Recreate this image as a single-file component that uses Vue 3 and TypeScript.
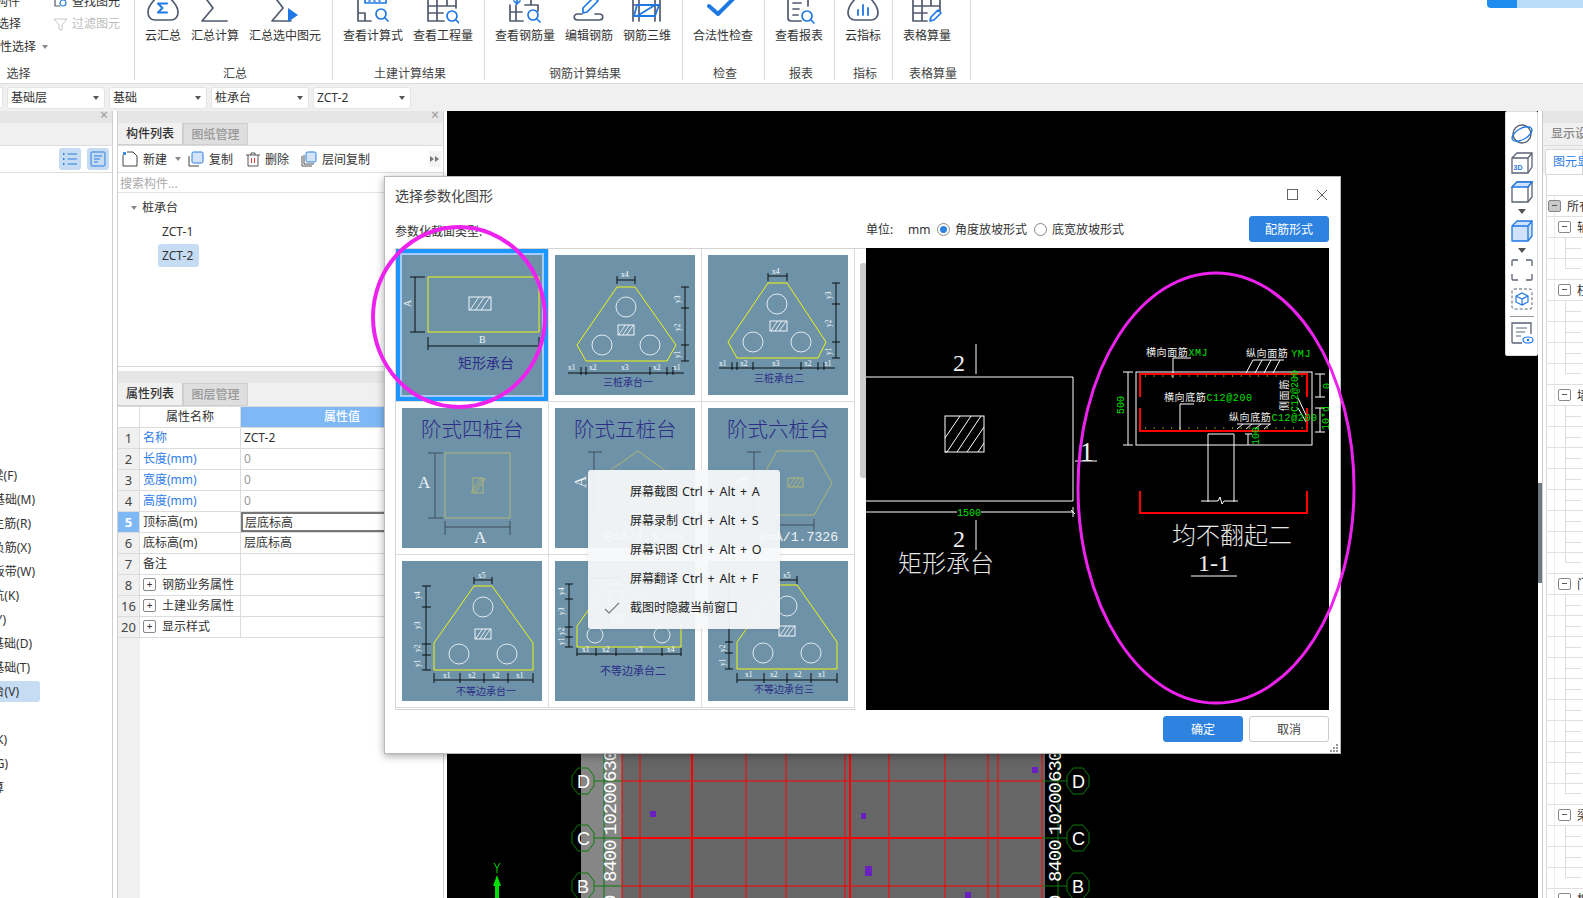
<script setup lang="ts">
interface Ico { dark?: string; blue?: string; solid?: string; sw?: number }
interface Tool { label: string; ico: Ico }
interface Group { name: string; width: number; tools: Tool[] }
const mag = (x: number, y: number) => `M${x + 5} ${y}a5 5 0 1 1-10 0a5 5 0 1 1 10 0M${x + 4} ${y + 4}L${x + 7} ${y + 7}`
const groups: Group[] = [
  { name: '汇总', width: 198, tools: [
    { label: '云汇总', ico: { dark: 'M8 -1C5 3 1 6 1 12C1 17 4 20 8 20H24C28 20 31 17 31 12C31 6 27 3 24 -1', blue: 'M20 3.5H11L15.5 8L11 12.5H20', sw: 2 } },
    { label: '汇总计算', ico: { dark: 'M28 21H3L14 8L5 -4' } },
    { label: '汇总选中图元', ico: { dark: 'M22 21H3L14 8L5 -4', solid: 'M19 8L29 15L19 22Z' } },
  ] },
  { name: '土建计算结果', width: 152, tools: [
    { label: '查看计算式', ico: { dark: 'M1 -2V21H14M1 13H8V21', blue: 'M8 -1V3H29V-1M12 1H13M17 1H18M22 1H23' + mag(24, 14) } },
    { label: '查看工程量', ico: { dark: 'M1 -2V21H17M1 6H29M1 13H16M10 -2V21M20 -2V6M29 -2V8', blue: mag(25, 16) } },
  ] },
  { name: '钢筋计算结果', width: 198, tools: [
    { label: '查看钢筋量', ico: { dark: 'M1 5V21H14M1 12H13M7 5V21M16 5H29V11M22 0V5', blue: 'M8 -2V3M5 1L8 4L11 1' + mag(24, 15) } },
    { label: '编辑钢筋', ico: { dark: 'M9 14H5C0 14 0 20 5 20H26C31 20 31 14 26 14H22', blue: 'M10 13L10 8L21 -3L25 1L14 12Z' } },
    { label: '钢筋三维', ico: { dark: 'M2 -2V21M8 -2V21M24 -2V21M29 -2V21M2 5H29', blue: 'M6 5H28L24 16H3ZM6 16L24 5', sw: 1.8 } },
  ] },
  { name: '检查', width: 82, tools: [
    { label: '合法性检查', ico: { blue: 'M2 6L11 14L28 -3', sw: 4 } },
  ] },
  { name: '报表', width: 70, tools: [
    { label: '查看报表', ico: { dark: 'M5 -3V18Q5 21 8 21H18M25 -2V6M10 3H18M10 9H16M10 15H15', blue: mag(24, 16) } },
  ] },
  { name: '指标', width: 58, tools: [
    { label: '云指标', ico: { dark: 'M8 -1C5 3 1 6 1 13C1 17 4 20 8 20H24C28 20 31 17 31 13C31 6 27 3 24 -1', blue: 'M11 10V15M16 5V15M21 8V15', sw: 1.8 } },
  ] },
  { name: '表格算量', width: 78, tools: [
    { label: '表格算量', ico: { dark: 'M2 -2V21H16M2 6H29V11M2 13H16M11 -2V21M20 -2V6M29 -2V11', blue: 'M19 21L20 17L27 10L30 13L23 20Z' } },
  ] },
]
const selects = ['基础层', '基础', '桩承台', 'ZCT-2']

const sideItems = [
  { t: '筏板主梁(F)', end: 17 }, { t: '筏板基础(M)', end: 35 }, { t: '筏板主筋(R)', end: 31 }, { t: '筏板负筋(X)', end: 31 },
  { t: '基础板带(W)', end: 35 }, { t: '集水坑(K)', end: 19 }, { t: '柱墩(Y)', end: 6 }, { t: '独立基础(D)', end: 32 },
  { t: '条形基础(T)', end: 30 }, { t: '桩承台(V)', end: 19, on: true }, { t: '', end: 0 }, { t: '地沟(K)', end: 7 },
  { t: '基础梁(G)', end: 8 }, { t: '自定义算', end: 4 },
]

interface Row { n: number; name: string; val?: string; blue?: boolean; gray?: boolean; sel?: boolean; plus?: boolean }
const props: Row[] = [
  { n: 1, name: '名称', val: 'ZCT-2', blue: true },
  { n: 2, name: '长度(mm)', val: '0', blue: true, gray: true },
  { n: 3, name: '宽度(mm)', val: '0', blue: true, gray: true },
  { n: 4, name: '高度(mm)', val: '0', blue: true, gray: true },
  { n: 5, name: '顶标高(m)', val: '层底标高', sel: true },
  { n: 6, name: '底标高(m)', val: '层底标高' },
  { n: 7, name: '备注' },
  { n: 8, name: '钢筋业务属性', plus: true },
  { n: 16, name: '土建业务属性', plus: true },
  { n: 20, name: '显示样式', plus: true },
]

interface Lab { x: number; y: number; t: string; s: number; f: string; r: number; serif?: boolean }
interface Pile { poly?: string; pc: string; circles: number[][]; hatch: number[]; hc: string; dims: string; dc: string; labs: Lab[] }
const navy = '#2d2d86'
const tiny = (x: number, y: number, t: string, r = 0): Lab => ({ x, y, t, s: 7.5, f: '#fff', r, serif: true })
const big = (x: number, y: number, t: string, s = 16, r = 0): Lab => ({ x, y, t, s, f: '#eef2f5', r, serif: true })
const cn = (x: number, y: number, t: string, s = 10): Lab => ({ x, y, t, s, f: navy, r: 0 })
const hatchPath = (h: number[]) => {
  const [x, y, w, ht] = h
  let d = ''
  for (let i = 1; i <= 3; i++) {
    const c = x + (w * i) / 4
    d += `M${c - ht / 3} ${y + ht}L${c + ht / 3} ${y}`
  }
  return d
}
const circ = (a: number[][], r = 10) => a.map((p) => [p[0], p[1], r])
const piles: Pile[] = [
  { poly: '26,22 137,22 137,77 26,77', pc: '#ffff00', circles: [], hatch: [67, 42, 22, 13], hc: '#fff',
    dims: 'M13 22V77M8 22H23M8 77H23M26 91H137M26 82V95M137 82V95', dc: '#000',
    labs: [{ ...big(9, 52, 'A', 10, -90) }, big(77, 88, 'B', 10), cn(56, 113, '矩形承台', 14)] },
  { poly: '62,32 80,32 121,90 112,106 31,106 22,90', pc: '#ffff00', circles: circ([[71, 52], [47, 90], [95, 90]]), hatch: [63, 70, 16, 10], hc: '#fff',
    dims: 'M62 25H80M62 21V29M80 21V29M130 32V106M126 32H134M126 53H134M126 90H134M126 106H134M13 118H129M26 112V120M31 112V120M95 112V120M112 112V120M118 112V120', dc: '#000',
    labs: [tiny(66, 22, 'x4'), tiny(125, 48, 'y3', -90), tiny(125, 76, 'y2', -90), tiny(125, 103, 'y1', -90), tiny(13, 115, 'x1'), tiny(34, 115, 'x2'), tiny(66, 115, 'x3'), tiny(98, 115, 'x2'), tiny(118, 115, 'x1'), cn(48, 131, '三桩承台一')] },
  { poly: '60,28 79,28 118,87 110,103 29,103 20,87', pc: '#ffff00', circles: circ([[69, 49], [45, 87], [93, 87]]), hatch: [62, 66, 17, 10], hc: '#fff',
    dims: 'M60 21H79M60 18V26M79 18V26M128 28V103M124 28H132M124 49H132M124 87H132M124 103H132M11 113H127M24 107V115M29 107V115M45 107V115M93 107V115M110 107V115M116 107V115', dc: '#000',
    labs: [tiny(64, 19, 'x4'), tiny(123, 44, 'y3', -90), tiny(123, 72, 'y2', -90), tiny(123, 100, 'y1', -90), tiny(11, 111, 'x1'), tiny(32, 111, 'x2'), tiny(64, 111, 'x3'), tiny(96, 111, 'x2'), tiny(116, 111, 'x1'), cn(46, 127, '三桩承台二')] },
  { poly: '43,45 108,45 108,110 43,110', pc: '#b8ba6e', circles: [], hatch: [71, 70, 10, 15], hc: '#b8ba6e',
    dims: 'M33 45V110M26 45H41M26 110H41M43 119H108M43 113V127M108 113V127', dc: '#3a4650',
    labs: [cn(19, 29, '阶式四桩台', 20.5), big(16, 80, 'A', 17), big(72, 135, 'A', 17)] },
  { poly: '83,43 118,68 105,108 60,108 47,68', pc: '#b8ba6e', circles: [], hatch: [76, 70, 14, 10], hc: '#b8ba6e',
    dims: 'M39 44V108M33 44H47M33 108H47', dc: '#3a4650',
    labs: [cn(19, 29, '阶式五桩台', 20.5), big(31, 80, 'A', 17, -90), { x: 49, y: 133, t: 'B=A/1.5385', s: 13.2, f: '#eef2f5', r: 0, serif: false }] },
  { poly: '69,43 106,43 124,75 106,107 69,107 51,75', pc: '#b8ba6e', circles: [], hatch: [80, 70, 15, 9], hc: '#b8ba6e',
    dims: 'M46 44V108M39 44H53M39 108H53M69 117H106M69 111V123M106 111V123', dc: '#3a4650',
    labs: [cn(19, 29, '阶式六桩台', 20.5), big(38, 80, 'A', 17, -90), { x: 51, y: 133, t: 'B=A/1.7326', s: 13.2, f: '#eef2f5', r: 0, serif: false }] },
  { poly: '72,25 90,25 131,82 131,109 32,109 32,82', pc: '#ffff00', circles: circ([[81, 46], [57, 93], [105, 93]]), hatch: [73, 68, 16, 10], hc: '#fff',
    dims: 'M72 19H90M72 16V23M90 16V23M24 25V109M20 25H29M20 46H29M20 83H29M20 94H29M20 109H29M32 119H131M32 112V122M58 112V122M82 112V122M106 112V122M131 112V122', dc: '#000',
    labs: [tiny(76, 17, 'x5'), tiny(18, 38, 'y4', -90), tiny(18, 68, 'y3', -90), tiny(18, 91, 'y2', -90), tiny(18, 106, 'y1', -90), tiny(41, 117, 'x1'), tiny(66, 117, 'x2'), tiny(90, 117, 'x2'), tiny(114, 117, 'x1'), cn(54, 134, '不等边承台一')] },
  { poly: '52,23 65,23 126,62 126,86 22,86 22,65', pc: '#ffff00', circles: circ([[61, 38], [40, 74], [107, 74]], 8), hatch: [57, 54, 12, 8], hc: '#fff',
    dims: 'M34 17H66M14 23V86M10 23H18M10 38H18M10 66H18M10 76H18M10 86H18M22 93H126M22 87V95M41 87V95M61 87V95M107 87V95M126 87V95', dc: '#000',
    labs: [tiny(9, 34, 'y4', -90), tiny(9, 54, 'y3', -90), tiny(9, 74, 'y2', -90), tiny(9, 84, 'y1', -90), tiny(27, 91, 'x1'), tiny(47, 91, 'x2'), tiny(80, 91, 'x3'), tiny(112, 91, 'x4'), cn(45, 114, '不等边承台二', 11)] },
  { poly: '70,24 89,24 129,81 129,108 29,108 29,81', pc: '#ffff00', circles: circ([[79, 45], [55, 92], [103, 92]]), hatch: [71, 65, 16, 10], hc: '#fff',
    dims: 'M70 19H89M70 15V23M89 15V23M21 24V108M17 81H25M17 92H25M17 108H25M29 119H129M29 112V122M56 112V122M79 112V122M103 112V122M129 112V122', dc: '#000',
    labs: [tiny(75, 17, 'x5'), tiny(17, 91, 'y2', -90), tiny(17, 105, 'y1', -90), tiny(37, 116, 'x1'), tiny(62, 116, 'x2'), tiny(86, 116, 'x2'), tiny(110, 116, 'x1'), cn(46, 132, '不等边承台三')] },
]

const menu = [
  { t: '屏幕截图', k: 'Ctrl + Alt + A' },
  { t: '屏幕录制', k: 'Ctrl + Alt + S' },
  { t: '屏幕识图', k: 'Ctrl + Alt + O' },
  { t: '屏幕翻译', k: 'Ctrl + Alt + F' },
  { t: '截图时隐藏当前窗口', k: '', check: true },
]

const vThin = [622, 640, 746, 786, 845, 889, 945, 988, 998, 1042]
const vThick = [692, 850]
const bubble = (cx: number, cy: number) => {
  const a = 11, b = 13
  return `M${cx - a} ${cy - 5}L${cx - 5} ${cy - b}H${cx + 5}L${cx + a} ${cy - 5}V${cy + 5}L${cx + 5} ${cy + b}H${cx - 5}L${cx - a} ${cy + 5}Z`
}
const axes = [
  { l: 'D', y: 781 },
  { l: 'C', y: 838 },
  { l: 'B', y: 886 },
]
const purple = [[650, 811, 6, 6], [861, 813, 5, 6], [865, 866, 7, 10], [1032, 767, 6, 6], [965, 892, 6, 6]]

const heads: Record<number, { t: string; lv: number }> = {
  0: { t: '所有构件', lv: 0 }, 1: { t: '轴线', lv: 1 }, 4: { t: '柱', lv: 1 }, 9: { t: '墙', lv: 1 },
  18: { t: '门窗洞', lv: 1 }, 29: { t: '梁', lv: 1 }, 33: { t: '板', lv: 1 },
}
const rightRows = Array.from({ length: 34 }, (_, i) => ({
  i,
  head: heads[i],
  last: !!heads[i + 1],
}))
</script>

<template>
  <div class="app">
    <header class="ribbon">
      <div class="grp grp-first">
        <div class="sel-tools">
          <div class="sel-col">
            <span>构件</span><span>选择</span><span>属性选择<i class="caret-sm"></i></span>
          </div>
          <div class="sel-col2">
            <span class="mini">
              <svg width="15" height="14" viewBox="0 0 15 14" fill="none"><path d="M2 -2V11H7" stroke="#555a68" stroke-width="1.2" /><circle cx="10" cy="8" r="3" stroke="#2d7fe0" stroke-width="1.2" /></svg>
              查找图元
            </span>
            <span class="mini off">
              <svg width="15" height="14" viewBox="0 0 15 14" fill="none"><path d="M1 2H14L9 8V13L6 12V8Z" stroke="#c8c8c8" /></svg>
              过滤图元
            </span>
          </div>
        </div>
        <div class="grp-name first-name">选择</div>
      </div>
      <div v-for="g in groups" :key="g.name" class="grp" :style="{ width: g.width + 'px' }">
        <div class="tools">
          <div v-for="t in g.tools" :key="t.label" class="tool">
            <svg class="tool-ico" viewBox="0 0 32 24" fill="none" stroke-linecap="round" stroke-linejoin="round">
              <path v-if="t.ico.dark" :d="t.ico.dark" stroke="#505a6e" stroke-width="1.7" />
              <path v-if="t.ico.blue" :d="t.ico.blue" stroke="#1f78e4" :stroke-width="t.ico.sw || 1.7" />
              <path v-if="t.ico.solid" :d="t.ico.solid" fill="#1f78e4" />
            </svg>
            <span class="tool-label">{{ t.label }}</span>
          </div>
        </div>
        <div class="grp-name">{{ g.name }}</div>
      </div>
      <div class="login"><span class="login-dark"></span><span class="login-light"></span></div>
    </header>

    <div class="selbar">
      <span class="stub"></span>
      <div v-for="s in selects" :key="s" class="drop">{{ s }}<i class="caret"></i></div>
    </div>

    <div class="main">
      <aside class="side">
        <div class="strip"><span class="x">×</span></div>
        <div class="side-tab"></div>
        <div class="side-tools">
          <span class="tbtn">
            <svg width="16" height="14" viewBox="0 0 16 14" fill="none" stroke="#2d7fe0"><path d="M5.5 2H15M5.5 7H15M5.5 12H15" /><path d="M1 2H2.5M1 7H2.5M1 12H2.5" stroke-width="2" /></svg>
          </span>
          <span class="tbtn">
            <svg width="16" height="16" viewBox="0 0 16 16" fill="none" stroke="#2d7fe0"><rect x="1" y="1" width="14" height="14" rx="1" /><path d="M4 5H12M4 8H10M4 11H8" /></svg>
          </span>
        </div>
        <ul class="side-list">
          <li v-for="(it, i) in sideItems" :key="i" class="side-item" :class="{ on: it.on }">
            <span class="side-txt" :style="{ width: it.end + 'px' }">{{ it.t }}</span>
          </li>
        </ul>
      </aside>

      <section class="mid">
        <div class="mid-top">
          <div class="strip"><span class="x">×</span></div>
          <div class="tabs"><span class="tab act">构件列表</span><span class="tab">图纸管理</span></div>
          <div class="mid-tools">
            <span class="act-item new">
              <svg width="16" height="16" viewBox="0 0 16 16" fill="none" stroke="#444"><path d="M1 4V15H15V5L11 1H5" /><path d="M1 1H4V4H1Z" fill="#3b8ae6" stroke="none" /></svg>
              新建<i class="caret-sm"></i>
            </span>
            <span class="act-item copy">
              <svg width="16" height="16" viewBox="0 0 16 16" fill="none"><path d="M1 5V15H11" stroke="#444" /><rect x="4" y="1" width="11" height="11" rx="1.5" fill="#d3e4f8" stroke="#2d7fe0" /></svg>
              复制
            </span>
            <span class="act-item del">
              <svg width="14" height="15" viewBox="0 0 14 15" fill="none" stroke="#555"><path d="M0 3H14M5 3V1H9V3M2 3V14H12V3" /><path d="M5.5 6V11M8.5 6V11" stroke="#d33" /></svg>
              删除
            </span>
            <span class="act-item floor">
              <svg width="16" height="16" viewBox="0 0 16 16" fill="none"><path d="M1 5V15H11M3 4V13H13" stroke="#555" /><rect x="5" y="1" width="10" height="10" rx="1.5" fill="#d3e4f8" stroke="#2d7fe0" /></svg>
              层间复制
            </span>
            <span class="more">
              <svg width="10" height="8" viewBox="0 0 10 8" fill="#777"><path d="M0 1L4 4L0 7ZM5 1L9 4L5 7Z" /></svg>
            </span>
          </div>
          <div class="search">搜索构件...</div>
          <div class="tree">
            <div class="tree-root"><i class="tri"></i>桩承台</div>
            <div class="tree-leaf">ZCT-1</div>
            <div class="tree-leaf cur">ZCT-2</div>
          </div>
        </div>
        <div class="mid-bot">
          <div class="strip"></div>
          <div class="tabs tabs-prop"><span class="tab act">属性列表</span><span class="tab">图层管理</span></div>
          <div class="ptable">
            <div class="prow phead">
              <span class="c-n"></span><span class="c-k">属性名称</span><span class="c-v hv">属性值</span>
            </div>
            <div v-for="r in props" :key="r.n" class="prow">
              <span class="c-n" :class="{ cursel: r.sel }">{{ r.n }}</span>
              <span class="c-k left" :class="{ blue: r.blue }">
                <i v-if="r.plus" class="plus">+</i>{{ r.name }}
              </span>
              <span class="c-v left" :class="{ gray: r.gray, vsel: r.sel }">{{ r.val }}</span>
            </div>
            <div class="pfill"></div>
          </div>
        </div>
      </section>

      <section class="cad">
        <svg class="cad-svg" viewBox="447 111 1091 787">
          <rect x="581" y="700" width="41" height="198" fill="#868686" />
          <rect x="622" y="700" width="423" height="198" fill="#666" />
          <path v-for="x in vThin" :key="x" :d="`M${x} 700V898`" stroke="#ff0000" stroke-width="1" />
          <path v-for="x in vThick" :key="x" :d="`M${x} 700V898`" stroke="#ff0000" stroke-width="2" />
          <path d="M622 781H1042M622 886H1042" stroke="#ff0000" />
          <path d="M622 838H1042" stroke="#ff0000" stroke-width="2" />
          <path d="M604 700V898M1058 700V898" stroke="#0a7a0a" />
          <g v-for="a in axes" :key="a.l">
            <path :d="`M594 ${a.y}H622M1042 ${a.y}H1067`" stroke="#0a7a0a" />
            <path :d="bubble(583, a.y)" stroke="#0a7a0a" fill="#000" fill-opacity="0" />
            <path :d="bubble(1078, a.y)" stroke="#0a7a0a" fill="none" />
            <text :x="577" :y="a.y + 7" class="axis">{{ a.l }}</text>
            <text :x="1072" :y="a.y + 7" class="axis">{{ a.l }}</text>
          </g>
          <path :d="bubble(583, 737)" stroke="#0a7a0a" fill="none" />
          <path :d="bubble(1078, 737)" stroke="#0a7a0a" fill="none" />
          <g class="dimt">
            <text transform="translate(616 782) rotate(-90)">630</text>
            <text transform="translate(616 835) rotate(-90)">10200</text>
            <text transform="translate(616 882) rotate(-90)">8400</text>
            <text transform="translate(616 906) rotate(-90)">0</text>
            <text transform="translate(1061 782) rotate(-90)">630</text>
            <text transform="translate(1061 835) rotate(-90)">10200</text>
            <text transform="translate(1061 882) rotate(-90)">8400</text>
            <text transform="translate(1061 906) rotate(-90)">0</text>
          </g>
          <rect v-for="(p, i) in purple" :key="i" :x="p[0]" :y="p[1]" :width="p[2]" :height="p[3]" fill="#6a1fc0" />
          <path d="M497 880V898" stroke="#00e000" stroke-width="4" />
          <path d="M497 875L493 886H501Z" fill="#00e000" />
          <path d="M494 863L497 868L500 863M497 868V873" stroke="#00e000" fill="none" />
        </svg>
        <nav class="vtools">
          <svg viewBox="0 0 24 24" fill="none"><ellipse cx="12" cy="12" rx="9" ry="9" stroke="#5a6274" stroke-width="1.4" /><ellipse cx="12" cy="12" rx="11" ry="5.5" transform="rotate(-30 12 12)" stroke="#1f78e4" stroke-width="1.4" /></svg>
          <svg viewBox="0 0 24 24" fill="none" stroke="#5a6274" stroke-width="1.3"><path d="M2 7V22H18V7ZM2 7L7 2H22V16L18 22M18 7L22 2" /><text x="3.5" y="19" class="ico3d">3D</text></svg>
          <svg viewBox="0 0 24 24" fill="none" stroke-width="1.3"><path d="M2 7V22H18L22 17V2" stroke="#5a6274" /><path d="M2 7L7 2H22L18 7V22" stroke="#5a6274" /><path d="M2 7L7 2H22L18 7Z" fill="#cfe2fa" stroke="#1f78e4" /></svg>
          <i class="vtri"></i>
          <svg viewBox="0 0 24 24" stroke-width="1.3"><path d="M2 7V22H18L22 17V2H7Z" fill="#cfe2fa" stroke="#1f78e4" /><path d="M2 7H18V22M18 7L22 2" fill="none" stroke="#1f78e4" /></svg>
          <i class="vtri"></i>
          <svg viewBox="0 0 24 24" fill="none" stroke="#5a6274" stroke-width="1.3"><path d="M2 8V3Q2 2 3 2H8M16 2H21Q22 2 22 3V8M22 16V21Q22 22 21 22H16M8 22H3Q2 22 2 21V16" /></svg>
          <svg viewBox="0 0 24 24" fill="none"><rect x="2" y="2" width="20" height="20" rx="2" stroke="#5a6274" stroke-dasharray="3 2" /><path d="M12 6L18 9V15L12 18L6 15V9ZM6 9L12 12L18 9M12 12V18" stroke="#1f78e4" stroke-width="1.2" /></svg>
          <span class="vline"></span>
          <svg viewBox="0 0 24 24" fill="none"><path d="M12 22H3Q2 22 2 21V2H21V13" stroke="#5a6274" stroke-width="1.3" /><path d="M6 7H17M6 11H15M6 15H11" stroke="#5a6274" /><ellipse cx="18" cy="19" rx="5" ry="3" stroke="#1f78e4" stroke-width="1.2" /><circle cx="18" cy="19" r="1.2" fill="#1f78e4" /></svg>
        </nav>
      </section>

      <div class="handle"></div>

      <aside class="right">
        <div class="strip"></div>
        <div class="r-tab">显示设置</div>
        <div class="r-tabs"><span class="r-tabact">图元显示</span></div>
        <div class="r-blank"></div>
        <div v-for="r in rightRows" :key="r.i" class="r-row" :class="{ last: r.last }">
          <template v-if="r.head">
            <i class="minus" :class="{ lv0: r.head.lv === 0 }"></i><span class="r-txt">{{ r.head.t }}</span>
          </template>
          <i v-else class="kid"></i>
        </div>
      </aside>
    </div>

    <div class="dialog">
      <div class="d-title">
        <span>选择参数化图形</span>
        <span class="d-max"></span>
        <svg class="d-close" width="12" height="12" viewBox="0 0 12 12" stroke="#666" fill="none"><path d="M1 1L11 11M11 1L1 11" /></svg>
      </div>
      <div class="d-opts">
        <span class="d-type">参数化截面类型:</span>
        <span class="d-unit">单位:</span>
        <span class="d-mm">mm</span>
        <span class="radio on"></span><span class="r-lab">角度放坡形式</span>
        <span class="radio"></span><span class="r-lab">底宽放坡形式</span>
        <button class="btn primary rebar">配筋形式</button>
      </div>
      <div class="d-body">
        <div class="list">
          <div class="grid">
            <div v-for="(p, i) in piles" :key="i" class="cell" :class="{ sel: i === 0 }">
              <svg class="pile" viewBox="0 0 140 140">
                <rect width="140" height="140" fill="#6e93a9" />
                <polygon v-if="p.poly" :points="p.poly" fill="none" :stroke="p.pc" stroke-width="0.9" />
                <circle v-for="(c, j) in p.circles" :key="j" :cx="c[0]" :cy="c[1]" :r="c[2]" fill="none" stroke="#fff" stroke-width="0.8" />
                <rect :x="p.hatch[0]" :y="p.hatch[1]" :width="p.hatch[2]" :height="p.hatch[3]" fill="none" :stroke="p.hc" stroke-width="0.9" />
                <path :d="hatchPath(p.hatch)" :stroke="p.hc" stroke-width="0.8" />
                <path :d="p.dims" :stroke="p.dc" stroke-width="0.9" fill="none" />
                <text
                  v-for="(l, j) in p.labs"
                  :key="'l' + j"
                  :transform="`translate(${l.x} ${l.y}) rotate(${l.r})`"
                  :font-size="l.s"
                  :fill="l.f"
                  :class="l.serif ? 'tx-serif' : l.f !== navy ? 'tx-mono' : l.s > 15 ? 'tx-cn tx-light' : 'tx-cn'"
                >{{ l.t }}</text>
              </svg>
            </div>
          </div>
          <div class="scroll"><span class="thumb"></span></div>
        </div>
        <div class="preview">
          <svg class="prev-svg" viewBox="866 248 463 462">
            <g fill="none" stroke="#fff">
              <path d="M866 377H1073V501H866" />
              <rect x="945" y="416" width="39" height="36" />
              <path d="M945 438L960 416M945 452H947L971 416M957 452L981 416M967 452L984 427M978 452L984 443" />
              <path d="M976 344V374M976 520V550M1075 461H1097" />
              <path d="M866 512H957M981 512H1073M1073 507V517M1071 510L1075 514" />
            </g>
            <text x="969" y="516" class="g9" text-anchor="middle">1500</text>
            <text x="953" y="371" class="cad-num">2</text>
            <text x="953" y="547" class="cad-num">2</text>
            <text x="1080" y="461" class="cad-num big">1</text>
            <text x="898" y="572" class="cad-cn">矩形承台</text>

            <g fill="none" stroke="#fff">
              <rect x="1136" y="372" width="176" height="73" />
              <path d="M1123 372H1133M1128 372V445M1123 445H1133" />
              <path d="M1315 374H1325M1320 374V397M1315 397H1325M1315 408H1325M1320 408V432M1315 432H1325" />
              <path d="M1173 378V358H1191M1180 432V404H1194" />
              <path d="M1253 360H1284M1245 375L1253 360M1254 375L1262 360M1263 375L1271 360M1272 375L1280 360" />
              <path d="M1237 424H1271M1237 429L1243 424M1246 429L1252 424M1255 429L1261 424M1264 429L1270 424" />
              <path d="M1298 398L1306 415M1298 408L1306 422" />
              <path d="M1245 434H1252M1248 434V445" />
              <path d="M1208 502V434H1234V502M1201 501H1218L1220 497L1222 504L1224 501H1238" />
            </g>
            <path d="M1140 397V374H1307V397M1140 408V431H1307V408M1140 491V513H1307V491" fill="none" stroke="#ff0000" stroke-width="2" />
            <path d="M1145 376H1304M1145 428H1304" stroke="#ffff00" stroke-width="1.2" stroke-dasharray="1 7.7" />
            <text x="1146" y="356" class="w9">横向面筋<tspan class="g9">XMJ</tspan></text>
            <text x="1246" y="357" class="w9">纵向面筋 <tspan class="g9">YMJ</tspan></text>
            <text x="1164" y="401" class="w9">横向底筋<tspan class="g9">C12@200</tspan></text>
            <text x="1229" y="421" class="w9">纵向底筋<tspan class="g9">C12@200</tspan></text>
            <text transform="translate(1288 411) rotate(-90)" class="w9">侧面筋</text>
            <text transform="translate(1298 412) rotate(-90)" class="g9">C12@200</text>
            <text transform="translate(1124 414) rotate(-90)" class="g9">500</text>
            <text transform="translate(1259 445) rotate(-90)" class="g9">100</text>
            <text transform="translate(1330 389) rotate(-90)" class="g9">0</text>
            <text transform="translate(1329 430) rotate(-90)" class="g9">10*d</text>
            <text x="1172" y="544" class="cad-cn">均不翻起二</text>
            <text x="1198" y="571" class="cad-num">1-1</text>
            <path d="M1191 576H1237" stroke="#fff" />
          </svg>
        </div>
      </div>
      <div class="d-foot">
        <button class="btn primary ok">确定</button>
        <button class="btn cancel">取消</button>
        <svg class="grip" width="8" height="8" viewBox="0 0 8 8" fill="#999"><path d="M6 0h2v2H6zM3 3h2v2H3zM6 3h2v2H6zM0 6h2v2H0zM3 6h2v2H3zM6 6h2v2H6z" /></svg>
      </div>
    </div>

    <svg class="marks" viewBox="0 0 1583 898">
      <ellipse class="thick" cx="459" cy="317" rx="86" ry="90" />
      <ellipse cx="1216" cy="488" rx="138" ry="215" />
    </svg>

    <div class="ctx">
      <div v-for="m in menu" :key="m.t" class="ctx-item">
        <svg v-if="m.check" class="ctx-check" width="16" height="12" viewBox="0 0 16 12" fill="none" stroke="#777" stroke-width="1.1"><path d="M1 7L5 11L15 1" /></svg>
        <span>{{ m.t }}</span><span v-if="m.k" class="ctx-key">{{ m.k }}</span>
      </div>
    </div>
  </div>
</template>

<style>
html, body { margin: 0; overflow: hidden; }
</style>

<style scoped>
.app {
  position: relative;
  width: 1583px;
  height: 898px;
  overflow: hidden;
  background: #fff;
  display: flex;
  flex-direction: column;
  font-family: "Noto Sans", "Noto Sans CJK SC", sans-serif;
  font-size: 12px;
  color: #333;
}
i { font-style: normal; }
ul { margin: 0; padding: 0; list-style: none; }

/* ribbon */
.ribbon {
  position: relative;
  height: 84px;
  flex: none;
  display: flex;
  align-items: flex-start;
  border-bottom: 1px solid #dcdcdc;
  box-sizing: border-box;
}
.grp {
  height: 80px;
  flex: none;
  box-sizing: border-box;
  border-right: 1px solid #d9d9d9;
  display: flex;
  flex-direction: column;
}
.grp-first { width: 135px; }
.sel-tools { display: flex; height: 67px; }
.sel-col {
  width: 52px;
  display: flex;
  flex-direction: column;
  align-items: flex-end;
  margin-top: -7px;
  gap: 4px;
  line-height: 18px;
  white-space: nowrap;
}
.sel-col span:nth-child(1) { margin-right: 32px; }
.sel-col span:nth-child(2) { margin-right: 31px; }
.sel-col span:nth-child(3) { margin-top: 1px; margin-right: 4px; }
.caret-sm {
  display: inline-block;
  margin-left: 6px;
  vertical-align: 2px;
  border: 3px solid transparent;
  border-top: 4px solid #888;
  border-bottom: 0;
}
.sel-col2 { display: flex; flex-direction: column; margin-top: -7px; gap: 4px; line-height: 18px; }
.mini { display: flex; align-items: center; gap: 4px; white-space: nowrap; padding-left: 1px; }
.mini.off { color: #bdbdbd; }
.first-name { padding-right: 100px; padding-left: 0; }
.tools { display: flex; gap: 10px; padding-left: 10px; height: 67px; }
.tool { display: flex; flex-direction: column; align-items: center; }
.tool-ico { width: 32px; height: 24px; overflow: hidden; flex: none; }
.tool-label { margin-top: 4px; line-height: 16px; white-space: nowrap; }
.grp-name { text-align: center; line-height: 13px; color: #444; padding-left: 3px; }
.login { position: absolute; right: 0; top: 0; display: flex; width: 96px; height: 8px; }
.login-dark { width: 30px; background: #1f8df0; border-radius: 0 0 0 4px; }
.login-light { flex: 1; background: #b9dcf9; }

/* select bar */
.selbar {
  height: 27px;
  flex: none;
  background: #f0f0f0;
  display: flex;
  align-items: center;
  gap: 4px;
}
.stub { width: 3px; height: 21px; background: #fff; border: 1px solid #e4e4e4; border-left: 0; box-sizing: border-box; }
.drop {
  position: relative;
  width: 98px;
  height: 22px;
  box-sizing: border-box;
  background: #fff;
  border: 1px solid #e4e4e4;
  border-radius: 3px;
  line-height: 20px;
  padding-left: 3px;
}
.caret {
  position: absolute;
  right: 5px;
  top: 8px;
  border: 3px solid transparent;
  border-top: 4px solid #555;
  border-bottom: 0;
}

/* main */
.main { flex: 1; display: flex; min-height: 0; }
.strip { height: 12px; background: #e6e6e6; position: relative; flex: none; }
.x { position: absolute; right: 4px; top: -3px; line-height: 14px; font-size: 14px; color: #999; }

.side { width: 113px; flex: none; border-right: 1px solid #cfcfcf; box-sizing: border-box; display: flex; flex-direction: column; }
.side-tab { height: 22px; background: #f0f0f0; flex: none; }
.side-tools {
  height: 28px;
  flex: none;
  border-top: 1px solid #dedede;
  border-bottom: 1px solid #dedede;
  display: flex;
  justify-content: flex-end;
  align-items: center;
  gap: 6px;
  padding-right: 3px;
  box-sizing: border-box;
}
.tbtn {
  width: 22px;
  height: 22px;
  background: #c5dcf2;
  border-radius: 3px;
  display: flex;
  align-items: center;
  justify-content: center;
}
.side-list { padding-top: 292px; }
.side-item { height: 24px; display: block; }
.side-item.on .side-txt { background: #c5dcf2; border-radius: 0 3px 3px 0; box-sizing: content-box; padding-right: 21px; height: 21px; }
.side-txt {
  display: flex;
  justify-content: flex-end;
  white-space: nowrap;
  line-height: 22px;
  height: 22px;
}

.mid {
  width: 327px;
  margin: 0 3px 0 4px;
  flex: none;
  display: flex;
  flex-direction: column;
  border-left: 1px solid #cfcfcf;
  border-right: 1px solid #cfcfcf;
  box-sizing: border-box;
}
.mid-top { height: 256px; flex: none; border-bottom: 1px solid #d6d6d6; box-sizing: border-box; display: flex; flex-direction: column; }
.mid-bot { margin-top: 4px; flex: 1; display: flex; flex-direction: column; min-height: 0; }
.tabs { height: 23px; flex: none; background: #f0f0f0; display: flex; border-bottom: 1px solid #dcdcdc; box-sizing: border-box; }
.tabs-prop { height: 24px; }
.tab {
  width: 65px;
  text-align: center;
  line-height: 21px;
  color: #999;
  background: #dedede;
  border: 1px solid #cfcfcf;
  box-sizing: border-box;
  font-weight: 500;
}
.tab.act { background: #f0f0f0; color: #333; width: 65px; border-top: 0; border-left: 0; }
.mid-tools {
  height: 27px;
  flex: none;
  position: relative;
  display: flex;
  align-items: center;
  border-bottom: 1px solid #dedede;
  box-sizing: border-box;
}
.act-item { display: flex; align-items: center; gap: 5px; white-space: nowrap; flex: none; }
.new { margin-left: 4px; }
.new .caret-sm { margin-left: 3px; vertical-align: 0; }
.copy { margin-left: 7px; }
.del { margin-left: 13px; }
.floor { margin-left: 12px; }
.more {
  position: absolute;
  right: 2px;
  top: 5px;
  width: 12px;
  height: 16px;
  display: flex;
  align-items: center;
  justify-content: center;
  background: #f4f4f4;
}
.search {
  height: 20px;
  flex: none;
  box-sizing: border-box;
  padding-left: 2px;
  line-height: 21px;
  color: #aaa;
  border-bottom: 1px solid #e3e3e3;
}
.tree { padding-top: 3px; }
.tree-root { height: 24px; line-height: 24px; padding-left: 24px; position: relative; }
.tri { position: absolute; left: 13px; top: 10px; border: 3px solid transparent; border-top: 4px solid #888; border-bottom: 0; }
.tree-leaf { height: 23px; line-height: 23px; margin-left: 44px; padding-left: 0; }
.tree-leaf.cur { margin-left: 40px; margin-top: 1px; padding-left: 4px; width: 37px; background: #c5dcf2; border-radius: 3px; }

.ptable { flex: 1; display: flex; flex-direction: column; min-height: 0; }
.prow { display: flex; height: 21px; flex: none; border-bottom: 1px solid #dcdcdc; box-sizing: border-box; }
.phead { height: 21px; }
.c-n {
  width: 22px;
  flex: none;
  background: #f0f0f0;
  border-right: 1px solid #dcdcdc;
  box-sizing: border-box;
  text-align: center;
  line-height: 20px;
  font-size: 13px;
  color: #444;
}
.phead .c-n { background: #fff; }
.cursel { background: #7eb9f5; color: #fff; font-weight: 700; }
.c-k {
  width: 101px;
  flex: none;
  border-right: 1px solid #dcdcdc;
  box-sizing: border-box;
  text-align: center;
  line-height: 20px;
  white-space: nowrap;
}
.left { text-align: left; padding-left: 3px; }
.blue { color: #2f7de8; }
.c-v { flex: 1; line-height: 20px; box-sizing: border-box; }
.hv { background: #7eb9f5; color: #fff; text-align: center; font-weight: 500; }
.gray { color: #999; }
.vsel { border: 2px solid #777; padding-left: 2px; line-height: 17px; }
.plus {
  display: inline-block;
  width: 11px;
  height: 11px;
  margin: 0 6px 0 0;
  border: 1px solid #888;
  border-radius: 2px;
  line-height: 10px;
  text-align: center;
  font-size: 10px;
  vertical-align: 1px;
}
.pfill { flex: 1; width: 22px; background: #f0f0f0; }

/* cad */
.cad { position: relative; width: 1091px; flex: none; background: #000; }
.cad-svg { display: block; width: 1091px; height: 787px; }
.axis { font: 18px "Liberation Sans", sans-serif; fill: #fff; }
.dimt text { font: 19px "Liberation Mono", monospace; fill: #fff; letter-spacing: -1px; }
.vtools {
  position: absolute;
  right: 0;
  top: 0;
  width: 33px;
  height: 245px;
  box-sizing: border-box;
  background: #fff;
  border: 1px solid #ddd;
  border-radius: 2px;
  display: flex;
  flex-direction: column;
  align-items: center;
  padding-top: 10px;
}
.vtools svg { flex: none; margin-bottom: 5px; width: 24px; height: 24px; }
.ico3d { font: bold 7px "Liberation Sans", sans-serif; fill: #1f78e4; stroke: none; }
.vtri { flex: none; margin: 0 0 5px; border: 4px solid transparent; border-top: 5px solid #555; border-bottom: 0; }
.vline { width: 24px; height: 1px; flex: none; background: #999; margin: 0 0 4px; }
.handle { width: 4px; height: 100px; flex: none; margin-top: 372px; background: #6d7880; }

.right { flex: 1; min-width: 0; display: flex; flex-direction: column; border-left: 1px solid #c8c8c8; overflow: hidden; }
.r-tab { height: 22px; flex: none; background: #f0f0f0; font-weight: 500; color: #888; line-height: 22px; padding-left: 8px; white-space: nowrap; border-bottom: 1px solid #dcdcdc; box-sizing: content-box; }
.r-tabs { height: 28px; flex: none; background: #f0f0f0; padding: 3px 0 0 2px; box-sizing: border-box; }
.r-tabact { display: block; height: 25px; background: #fff; border: 1px solid #d8d8d8; border-bottom: 0; border-radius: 3px 0 0 0; color: #2f7de8; line-height: 24px; padding-left: 7px; white-space: nowrap; }
.r-blank { height: 22px; flex: none; margin-left: 3px; border-left: 1px solid #d8d8d8; border-top: 1px solid #d8d8d8; border-bottom: 1px solid #dcdcdc; box-sizing: border-box; }
.r-row {
  position: relative;
  height: 21px;
  flex: none;
  box-sizing: border-box;
  margin-left: 3px;
  border-left: 1px solid #d8d8d8;
  border-bottom: 1px solid #e0e0e0;
  display: flex;
  align-items: center;
  padding-left: 11px;
  white-space: nowrap;
}
.r-row::before { content: ""; position: absolute; left: 7px; top: 0; bottom: 0; width: 1px; background: #ececec; }
.minus {
  position: relative;
  width: 13px;
  height: 12px;
  box-sizing: border-box;
  flex: none;
  border: 1px solid #888;
  border-radius: 2px;
  background: #fff;
}
.minus::after { content: ""; position: absolute; left: 3px; right: 3px; top: 4px; height: 1px; background: #555; }
.minus.lv0 { margin-left: -10px; background: #c9c9c9; }
.r-txt { margin-left: 6px; color: #333; }
.kid {
  width: 16px;
  height: 100%;
  flex: none;
  margin-left: 7px;
  box-sizing: border-box;
  border-left: 1px solid #dedede;
  position: relative;
}
.kid::after { content: ""; position: absolute; left: 0; right: 0; top: 50%; height: 1px; background: #dedede; }
.last .kid { height: 50%; align-self: flex-start; border-bottom: 1px solid #dedede; }
.last .kid::after { display: none; }

/* dialog */
.dialog {
  position: absolute;
  left: 384px;
  top: 176px;
  width: 957px;
  height: 578px;
  box-sizing: border-box;
  background: #fff;
  border: 1px solid #b9b9b9;
  box-shadow: 0 2px 8px rgba(0, 0, 0, 0.35);
  display: flex;
  flex-direction: column;
}
.d-title {
  height: 35px;
  flex: none;
  display: flex;
  align-items: center;
  padding: 0 12px 0 10px;
  font-size: 14px;
  color: #444;
}
.d-max { width: 9px; height: 9px; border: 1px solid #666; margin-left: auto; margin-right: 18px; }
.d-opts { height: 36px; flex: none; display: flex; align-items: center; padding: 0 11px 2px 10px; box-sizing: border-box; white-space: nowrap; }
.d-type { width: 471px; flex: none; margin-top: 3px; }
.d-unit { width: 42px; flex: none; }
.d-mm { width: 29px; flex: none; }
.radio {
  position: relative;
  width: 13px;
  height: 13px;
  flex: none;
  box-sizing: border-box;
  border: 1px solid #888;
  border-radius: 50%;
  margin-right: 5px;
}
.radio.on::after { content: ""; position: absolute; inset: 2px; border-radius: 50%; background: #2e83e0; }
.r-lab { margin-right: 7px; }
.btn {
  box-sizing: border-box;
  font: inherit;
  border-radius: 3px;
  width: 80px;
  padding: 0;
  height: 26px;
  border: 1px solid #ccc;
  background: #fff;
  color: #444;
}
.primary { background: #2e83e0; border-color: #2e83e0; color: #fff; }
.rebar { margin-left: auto; }
.d-body { height: 462px; flex: none; display: flex; margin: 0 11px 0 10px; }
.list { width: 471px; flex: none; display: flex; border-top: 1px solid #d4d4d4; box-sizing: border-box; overflow: hidden; }
.grid {
  width: 460px;
  height: 460px;
  flex: none;
  display: grid;
  grid-template-columns: repeat(3, 153px);
  grid-auto-rows: 153px;
  border-left: 1px solid #d4d4d4;
  border-bottom: 1px solid #d4d4d4;
  box-sizing: content-box;
}
.cell {
  box-sizing: border-box;
  padding: 6px 0 0 6px;
  border-right: 1px solid #dcdcdc;
  border-bottom: 1px solid #dcdcdc;
}
.cell.sel { background: #a3ccf8; box-shadow: inset 0 0 0 4px #1e96ff; }
.pile { display: block; width: 140px; height: 140px; }
.tx-serif { font-family: "Liberation Serif", serif; }
.tx-mono { font-family: "Liberation Mono", monospace; }
.tx-cn { font-family: "Noto Sans CJK SC", sans-serif; }
.tx-light { font-weight: 300; }
.scroll { flex: 1; padding-left: 4px; }
.thumb { display: block; width: 7px; height: 215px; margin-top: 14px; background: #ccc; border-radius: 3px; }
.preview { flex: 1; background: #000; min-width: 0; }
.prev-svg { display: block; width: 463px; height: 462px; }
.g9 { font: 10px "Liberation Mono", monospace; fill: #00e000; }
.w9 { font: 10px "Noto Sans CJK SC", sans-serif; fill: #eee; letter-spacing: 0.6px; }
.cad-num { font: 24px "Liberation Serif", serif; fill: #eee; }
.cad-num.big { font-size: 27px; }
.cad-cn { font: 300 24px "Noto Sans CJK SC", sans-serif; fill: #e6e6e6; }
.d-foot { flex: 1; position: relative; display: flex; justify-content: flex-end; gap: 6px; padding: 6px 11px 0 0; box-sizing: border-box; }
.ok, .cancel { height: 26px; }
.grip { position: absolute; right: 2px; bottom: 1px; }

.marks { position: absolute; left: 0; top: 0; width: 1583px; height: 898px; pointer-events: none; }
.marks ellipse { fill: none; stroke: #ee22ee; stroke-width: 3; }
.marks ellipse.thick { stroke-width: 4; }

.ctx {
  position: absolute;
  left: 588px;
  top: 470px;
  width: 192px;
  height: 159px;
  box-sizing: border-box;
  padding-top: 7px;
  background: rgba(246, 248, 250, 0.94);
  border-radius: 3px;
  box-shadow: 0 1px 4px rgba(0, 0, 0, 0.08);
}
.ctx-item { position: relative; height: 29px; line-height: 29px; padding-left: 42px; white-space: nowrap; color: #222; }
.ctx-key { margin-left: 4px; word-spacing: 1.5px; font-size: 12.5px; }
.ctx-check { position: absolute; left: 16px; top: 9px; }
</style>
